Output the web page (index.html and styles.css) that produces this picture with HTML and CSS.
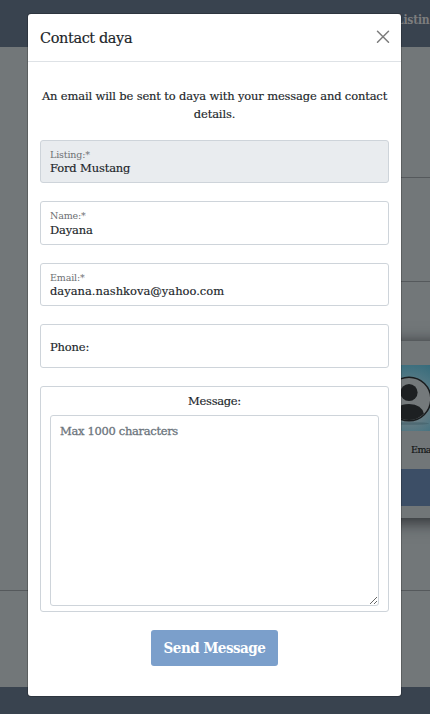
FILE: index.html
```html
<!DOCTYPE html>
<html lang="en">
<head>
<meta charset="utf-8">
<title>Contact daya</title>
<link rel="stylesheet" href="styles.css">
</head>
<body>
<div class="page">
  <header class="topbar"><span class="nav-link">Listin</span></header>
  <main class="content">
    <div class="row row-one"></div>
    <div class="row row-two"></div>
    <div class="row row-three">
      <aside class="seller">
        <div class="avatar">
          <svg viewBox="0 0 66 66" width="66" height="66">
            <ellipse cx="33" cy="58.5" rx="20" ry="1.3" fill="#3c5a64" opacity=".5"/>
            <circle cx="33" cy="34" r="21.8" fill="#74797b" stroke="#191c1e" stroke-width="1.5"/>
            <clipPath id="ring"><circle cx="33" cy="34" r="21"/></clipPath>
            <g clip-path="url(#ring)" fill="#1d2022"><circle cx="33" cy="27.5" r="8.6"/><path d="M18 57V49Q19 39.5 33 39Q46 39.5 48 49V57Z"/></g>
          </svg>
        </div>
        <div class="seller-email">Ema</div>
        <div class="seller-button"></div>
      </aside>
    </div>
  </main>
  <footer class="footer"></footer>
</div>
<div class="modal">
  <div class="modal-header">
    <h1 class="title">Contact daya</h1>
    <svg class="close" viewBox="0 0 14 14" width="14" height="14"><path d="M1.5 1.2L12.5 12.2M12.5 1.2L1.5 12.2" fill="none" stroke="#7c7c7c" stroke-width="1.5" stroke-linecap="round"/></svg>
  </div>
  <div class="modal-body">
    <p class="intro">An email will be sent to daya with your message and contact<br>details.</p>
    <div class="field disabled"><span class="label">Listing:*</span><span class="value">Ford Mustang</span></div>
    <div class="field name"><span class="label">Name:*</span><span class="value">Dayana</span></div>
    <div class="field"><span class="label">Email:*</span><span class="value email">dayana.nashkova@yahoo.com</span></div>
    <div class="field phone"><span class="value">Phone:</span></div>
    <div class="message">
      <label class="message-label" for="msg">Message:</label>
      <textarea class="message-input" id="msg" placeholder="Max 1000 characters"></textarea>
    </div>
    <button class="send">Send Message</button>
  </div>
</div>
</body>
</html>
```
FILE: styles.css
```css
* { box-sizing: border-box; }
body {
  margin: 0;
  width: 430px;
  height: 714px;
  overflow: hidden;
  font-family: "Roboto Slab", "DejaVu Serif", serif;
  font-size: 11.5px;
  letter-spacing: -0.15px;
  color: #212529;
  -webkit-text-stroke: 0.15px currentColor;
}
.page { display: flex; flex-direction: column; height: 714px; background: #727779; }
.topbar { height: 47px; background: #39434f; padding: 12px 0 0 396px; white-space: nowrap; }
.nav-link { font-family: "Roboto Slab", "DejaVu Serif Condensed", serif; font-size: 12px; line-height: 16px; font-weight: 700; color: #7c7d7e; letter-spacing: -0.2px; -webkit-text-stroke: 0; }
.content { flex: 1; }
.row { border-bottom: 1px solid #55595c; }
.row-one, .row-two { margin-left: 215px; }
.row-one { height: 131px; }
.row-two { height: 104px; }
.row-three { height: 309px; padding: 59px 0 0 340px; overflow: hidden; }
.seller { width: 140px; height: 177px; padding-top: 24px; background: #717678; box-shadow: 0 3px 14px 2px #33363a; }
.avatar { display: flex; justify-content: center; width: 100px; height: 66px; margin-left: 19px; background: radial-gradient(circle 52px at 50px 40px, #6f7e84 25%, #4b7582 60%, #2b6778 100%); }
.seller-email { width: 90px; height: 38px; padding: 11px 0 0 71px; font-size: 9.5px; line-height: 15px; letter-spacing: -0.55px; color: #101214; }
.seller-button { height: 37px; background: #3c4e66; }
.footer { height: 27px; background: #39434f; }
.modal {
  position: absolute;
  left: 28px;
  top: 14px;
  width: 373px;
  height: 682px;
  background: #fff;
  border-radius: 3px;
  box-shadow: 0 0 0 1px rgba(0, 0, 0, .2);
}
.modal-header { display: flex; align-items: center; justify-content: space-between; height: 48px; padding: 0 11px 0 12px; border-bottom: 1px solid #dee2e6; }
.close { margin-bottom: 1px; }
.title { margin: 0; font-size: 14.5px; line-height: 22px; font-weight: 400; letter-spacing: -0.4px; }
.modal-body { padding: 25px 12px 0; }
.intro { margin: 0 -8px 17px; text-align: center; line-height: 18px; white-space: nowrap; }
.field { display: flex; flex-direction: column; height: 43px; margin-bottom: 18px; padding: 7px 9px 0; border: 1px solid #ced4da; border-radius: 3px; }
.disabled { background: #e9ecef; }
.name { height: 44px; }
.label { font-size: 9.5px; line-height: 14px; color: #6d7073; -webkit-text-stroke: 0; }
.value { line-height: 13px; }
.name .value { line-height: 14px; }
.email { letter-spacing: 0; }
.phone { height: 44px; padding-top: 16px; }
.message { height: 226px; padding: 5px 9px 0; border: 1px solid #ced4da; border-radius: 3px; text-align: center; }
.message-label { display: block; height: 23px; line-height: 18px; letter-spacing: -0.3px; }
.message-input { display: block; width: 100%; height: 191px; padding: 6px 9px; border: 1px solid #ced4da; border-radius: 3px; font: inherit; letter-spacing: -0.32px; line-height: 18px; resize: both; outline: 0; -webkit-text-stroke: 0.3px currentColor; }
.message-input::placeholder { color: #6c757d; opacity: 1; }
.send { display: block; width: 127px; height: 36px; margin: 18px auto 0; padding: 0; border: 0; border-radius: 3px; background: #7b9fcb; color: #fff; font-family: "Roboto Slab", "DejaVu Serif Condensed", serif; font-size: 15px; font-weight: 700; letter-spacing: -0.5px; white-space: nowrap; -webkit-text-stroke: 0; }
```
